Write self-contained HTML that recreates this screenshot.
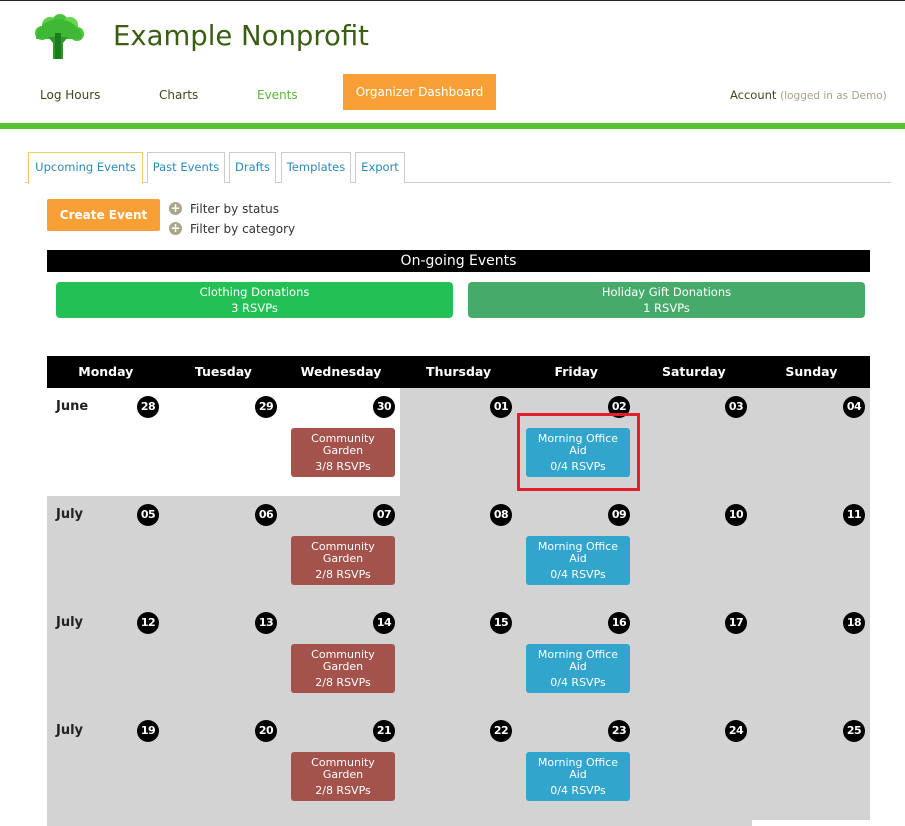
<!DOCTYPE html>
<html><head><meta charset="utf-8"><style>
*{margin:0;padding:0;box-sizing:border-box}
body{width:905px;height:825px;overflow:hidden;background:#fff;font-family:"DejaVu Sans","Liberation Sans",sans-serif;position:relative;border-top:1px solid #222}
.a{position:absolute}
.nav{font-size:12px;color:#3a4a1a;top:87px}
.tab{position:absolute;top:151px;height:31px;border:1px solid #ccc;border-bottom:none;font-size:11.5px;color:#2a8ab8;text-align:center;line-height:29px;background:#fff;white-space:nowrap}
.d{position:absolute;width:22px;height:22px;border-radius:50%;background:#000;color:#fff;font-size:11px;font-weight:bold;text-align:center;line-height:22px;letter-spacing:-0.5px}
.m{position:absolute;font-size:13px;font-weight:bold;color:#222}
.ev{position:absolute;width:104px;height:49px;border-radius:3px;color:#fff;font-size:11px;text-align:center;line-height:12px;padding-top:5px}
.ev span{display:block;margin-top:4px}
.hd{position:absolute;top:355px;height:32px;width:117.6px;color:#fff;font-size:12.5px;font-weight:bold;text-align:center;line-height:32px}
</style></head><body>
<svg class="a" style="left:30px;top:12px" width="56" height="48" viewBox="0 0 56 48">
<circle cx="12" cy="20" r="7" fill="#4cc43a"/><circle cx="20" cy="12" r="8" fill="#5ad044"/><circle cx="30" cy="9" r="8" fill="#4cc43a"/><circle cx="40" cy="12" r="8" fill="#62d84a"/><circle cx="47" cy="21" r="7" fill="#4cc43a"/>
<path d="M6 26 C6 14 18 6 28 6 C38 6 52 14 52 26 Z" fill="#3fb836"/>
<path d="M18 24 L38 24 L33 30 L33 46 L23 46 L23 30 Z" fill="#2e9a2a"/>
<rect x="25" y="20" width="6" height="26" fill="#1e7a1e"/>
</svg>
<div class="a" style="left:113px;top:19px;font-size:27.5px;color:#3a5e12">Example Nonprofit</div>
<div class="a nav" style="left:40px">Log Hours</div>
<div class="a nav" style="left:159px">Charts</div>
<div class="a nav" style="left:257px;color:#5ab43a">Events</div>
<div class="a" style="left:343px;top:73px;width:153px;height:36px;background:#f89f35;color:#fff;font-size:12px;text-align:center;line-height:36px">Organizer Dashboard</div>
<div class="a nav" style="left:730px;top:87px;font-size:11.5px">Account <span style="color:#aaa088;font-size:10.5px">(logged in as Demo)</span></div>
<div class="a" style="left:0;top:122px;width:905px;height:6px;background:#56c22e"></div>
<div class="a" style="left:25px;top:181px;width:866px;height:1px;background:#ccc"></div>
<div class="tab" style="left:28px;width:115px;border-color:#f0d060;height:32px">Upcoming Events</div>
<div class="tab" style="left:147px;width:78px">Past Events</div>
<div class="tab" style="left:229px;width:47px">Drafts</div>
<div class="tab" style="left:281px;width:70px">Templates</div>
<div class="tab" style="left:355px;width:50px">Export</div>
<div class="a" style="left:47px;top:198px;width:113px;height:32px;background:#f89f35;border-radius:2px;color:#fff;font-size:12px;font-weight:bold;text-align:center;line-height:32px">Create Event</div>
<div class="a" style="left:169px;top:201px;width:13px;height:13px;border-radius:50%;background:#aaa48a;color:#fff;font-size:12px;line-height:13px;text-align:center;font-weight:bold">+</div>
<div class="a" style="left:169px;top:221px;width:13px;height:13px;border-radius:50%;background:#aaa48a;color:#fff;font-size:12px;line-height:13px;text-align:center;font-weight:bold">+</div>
<div class="a" style="left:190px;top:201px;font-size:12px;color:#333">Filter by status</div>
<div class="a" style="left:190px;top:221px;font-size:12px;color:#333">Filter by category</div>
<div class="a" style="left:47px;top:249px;width:823px;height:22px;background:#000;color:#fff;font-size:14px;text-align:center;line-height:22px">On-going Events</div>
<div class="a" style="left:56px;top:281px;width:397px;height:36px;background:#22c055;border-radius:4px;color:#fff;font-size:11.5px;text-align:center;line-height:16px;padding-top:2px">Clothing Donations<br>3 RSVPs</div>
<div class="a" style="left:468px;top:281px;width:397px;height:36px;background:#45aa6a;border-radius:4px;color:#fff;font-size:11.5px;text-align:center;line-height:16px;padding-top:2px">Holiday Gift Donations<br>1 RSVPs</div>
<div class="a" style="left:47px;top:355px;width:823px;height:32px;background:#000"></div>
<div class="hd" style="left:47px">Monday</div><div class="hd" style="left:164.6px">Tuesday</div><div class="hd" style="left:282.2px">Wednesday</div><div class="hd" style="left:399.8px">Thursday</div><div class="hd" style="left:517.4px">Friday</div><div class="hd" style="left:635px">Saturday</div><div class="hd" style="left:752.6px">Sunday</div>
<div class="a" style="left:47px;top:387px;width:823px;height:432px;background:#d3d3d3"></div>
<div class="a" style="left:47px;top:387px;width:353px;height:108px;background:#fff"></div>
<div class="a" style="left:47px;top:819px;width:705px;height:6px;background:#d3d3d3"></div>
<div class="m" style="left:56px;top:398px">June</div>
<div class="m" style="left:56px;top:506px">July</div>
<div class="m" style="left:56px;top:614px">July</div>
<div class="m" style="left:56px;top:722px">July</div>
<div class="d" style="left:137px;top:395px">28</div><div class="d" style="left:255px;top:395px">29</div><div class="d" style="left:373px;top:395px">30</div><div class="d" style="left:490px;top:395px">01</div><div class="d" style="left:608px;top:395px">02</div><div class="d" style="left:725px;top:395px">03</div><div class="d" style="left:843px;top:395px">04</div>
<div class="d" style="left:137px;top:503px">05</div><div class="d" style="left:255px;top:503px">06</div><div class="d" style="left:373px;top:503px">07</div><div class="d" style="left:490px;top:503px">08</div><div class="d" style="left:608px;top:503px">09</div><div class="d" style="left:725px;top:503px">10</div><div class="d" style="left:843px;top:503px">11</div>
<div class="d" style="left:137px;top:611px">12</div><div class="d" style="left:255px;top:611px">13</div><div class="d" style="left:373px;top:611px">14</div><div class="d" style="left:490px;top:611px">15</div><div class="d" style="left:608px;top:611px">16</div><div class="d" style="left:725px;top:611px">17</div><div class="d" style="left:843px;top:611px">18</div>
<div class="d" style="left:137px;top:719px">19</div><div class="d" style="left:255px;top:719px">20</div><div class="d" style="left:373px;top:719px">21</div><div class="d" style="left:490px;top:719px">22</div><div class="d" style="left:608px;top:719px">23</div><div class="d" style="left:725px;top:719px">24</div><div class="d" style="left:843px;top:719px">25</div>
<div class="ev" style="left:291px;top:427px;background:#a4524c">Community<br>Garden<span>3/8 RSVPs</span></div>
<div class="ev" style="left:291px;top:535px;background:#a4524c">Community<br>Garden<span>2/8 RSVPs</span></div>
<div class="ev" style="left:291px;top:643px;background:#a4524c">Community<br>Garden<span>2/8 RSVPs</span></div>
<div class="ev" style="left:291px;top:751px;background:#a4524c">Community<br>Garden<span>2/8 RSVPs</span></div>
<div class="ev" style="left:526px;top:427px;background:#31a5cb">Morning Office<br>Aid<span>0/4 RSVPs</span></div>
<div class="ev" style="left:526px;top:535px;background:#31a5cb">Morning Office<br>Aid<span>0/4 RSVPs</span></div>
<div class="ev" style="left:526px;top:643px;background:#31a5cb">Morning Office<br>Aid<span>0/4 RSVPs</span></div>
<div class="ev" style="left:526px;top:751px;background:#31a5cb">Morning Office<br>Aid<span>0/4 RSVPs</span></div>
<div class="a" style="left:517px;top:412px;width:123px;height:78px;border:3px solid #e0202a"></div>
</body></html>
